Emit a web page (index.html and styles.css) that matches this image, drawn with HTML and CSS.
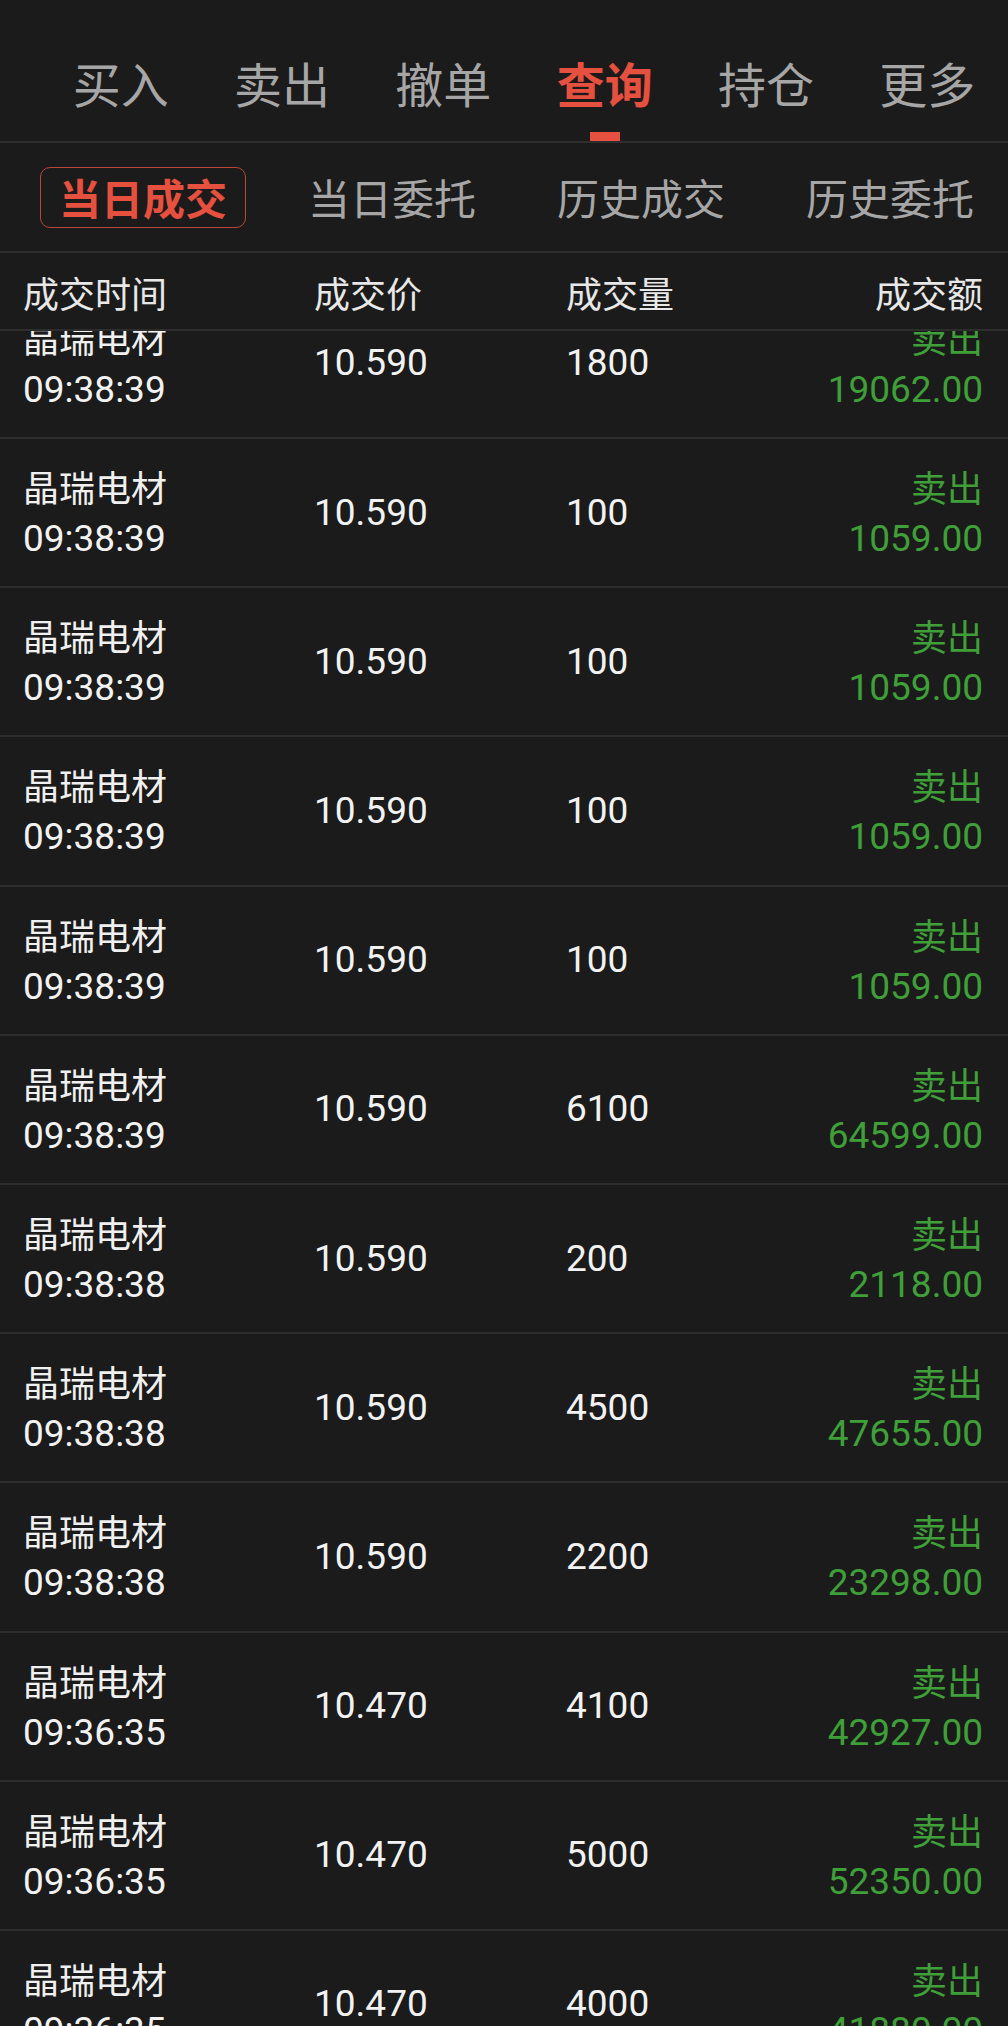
FILE: index.html
```html
<!DOCTYPE html>
<html lang="zh-CN">
<head>
<meta charset="utf-8">
<title>查询 - 当日成交</title>
<link rel="stylesheet" href="styles.css">
</head>
<body>
<div class="app">
  <nav class="topbar">
    <div class="tab"><span class="tab-label">买入</span><span class="tab-ind"></span></div>
    <div class="tab"><span class="tab-label">卖出</span><span class="tab-ind"></span></div>
    <div class="tab"><span class="tab-label">撤单</span><span class="tab-ind"></span></div>
    <div class="tab active"><span class="tab-label">查询</span><span class="tab-ind"></span></div>
    <div class="tab"><span class="tab-label">持仓</span><span class="tab-ind"></span></div>
    <div class="tab"><span class="tab-label">更多</span><span class="tab-ind"></span></div>
  </nav>
  <div class="subtabs">
    <div class="subtab active">当日成交</div>
    <div class="subtab">当日委托</div>
    <div class="subtab">历史成交</div>
    <div class="subtab">历史委托</div>
  </div>
  <div class="thead">
    <div class="th">成交时间</div>
    <div class="th">成交价</div>
    <div class="th">成交量</div>
    <div class="th th-right">成交额</div>
  </div>
  <div class="list">
    <div class="row"><div class="c1"><span class="name">晶瑞电材</span><span class="num">09:38:39</span></div><div class="num mid">10.590</div><div class="num mid">1800</div><div class="c4"><span class="side">卖出</span><span class="num green">19062.00</span></div></div>
    <div class="row"><div class="c1"><span class="name">晶瑞电材</span><span class="num">09:38:39</span></div><div class="num mid">10.590</div><div class="num mid">100</div><div class="c4"><span class="side">卖出</span><span class="num green">1059.00</span></div></div>
    <div class="row"><div class="c1"><span class="name">晶瑞电材</span><span class="num">09:38:39</span></div><div class="num mid">10.590</div><div class="num mid">100</div><div class="c4"><span class="side">卖出</span><span class="num green">1059.00</span></div></div>
    <div class="row"><div class="c1"><span class="name">晶瑞电材</span><span class="num">09:38:39</span></div><div class="num mid">10.590</div><div class="num mid">100</div><div class="c4"><span class="side">卖出</span><span class="num green">1059.00</span></div></div>
    <div class="row"><div class="c1"><span class="name">晶瑞电材</span><span class="num">09:38:39</span></div><div class="num mid">10.590</div><div class="num mid">100</div><div class="c4"><span class="side">卖出</span><span class="num green">1059.00</span></div></div>
    <div class="row"><div class="c1"><span class="name">晶瑞电材</span><span class="num">09:38:39</span></div><div class="num mid">10.590</div><div class="num mid">6100</div><div class="c4"><span class="side">卖出</span><span class="num green">64599.00</span></div></div>
    <div class="row"><div class="c1"><span class="name">晶瑞电材</span><span class="num">09:38:38</span></div><div class="num mid">10.590</div><div class="num mid">200</div><div class="c4"><span class="side">卖出</span><span class="num green">2118.00</span></div></div>
    <div class="row"><div class="c1"><span class="name">晶瑞电材</span><span class="num">09:38:38</span></div><div class="num mid">10.590</div><div class="num mid">4500</div><div class="c4"><span class="side">卖出</span><span class="num green">47655.00</span></div></div>
    <div class="row"><div class="c1"><span class="name">晶瑞电材</span><span class="num">09:38:38</span></div><div class="num mid">10.590</div><div class="num mid">2200</div><div class="c4"><span class="side">卖出</span><span class="num green">23298.00</span></div></div>
    <div class="row"><div class="c1"><span class="name">晶瑞电材</span><span class="num">09:36:35</span></div><div class="num mid">10.470</div><div class="num mid">4100</div><div class="c4"><span class="side">卖出</span><span class="num green">42927.00</span></div></div>
    <div class="row"><div class="c1"><span class="name">晶瑞电材</span><span class="num">09:36:35</span></div><div class="num mid">10.470</div><div class="num mid">5000</div><div class="c4"><span class="side">卖出</span><span class="num green">52350.00</span></div></div>
    <div class="row"><div class="c1"><span class="name">晶瑞电材</span><span class="num">09:36:35</span></div><div class="num mid">10.470</div><div class="num mid">4000</div><div class="c4"><span class="side">卖出</span><span class="num green">41880.00</span></div></div>
  </div>
</div>
</body>
</html>
```

FILE: styles.css
```css
html, body {
  margin: 0;
  padding: 0;
  background: #1b1b1b;
  height: 2026px;
  overflow: hidden;
}
body {
  font-family: "Noto Sans CJK SC", "Noto Sans", sans-serif;
  color: #eeeeee;
}
.app {
  width: 1008px;
  height: 2026px;
  display: flex;
  flex-direction: column;
  overflow: hidden;
}

/* top tabs */
.topbar {
  display: grid;
  grid-template-columns: repeat(6, 1fr);
  padding: 58px 0 0 40px;
  border-bottom: 2px solid #2d2d2d;
  flex: none;
}
.tab {
  display: flex;
  flex-direction: column;
  align-items: center;
}
.tab-label {
  font-size: 48px;
  line-height: 48px;
  color: #a6a6a6;
}
.tab-ind {
  width: 30px;
  height: 9px;
  margin-top: 26px;
  background: #e5503f;
  visibility: hidden;
}
.tab.active .tab-label {
  color: #e5503f;
  font-weight: 700;
}
.tab.active .tab-ind {
  visibility: visible;
}

/* sub tabs */
.subtabs {
  height: 108px;
  display: flex;
  align-items: center;
  gap: 43px;
  padding-left: 40px;
  border-bottom: 2px solid #2d2d2d;
  flex: none;
}
.subtab {
  box-sizing: border-box;
  height: 61px;
  padding: 0 18px;
  border: 1.5px solid transparent;
  border-radius: 10px;
  font-size: 42px;
  line-height: 58px;
  color: #a6a6a6;
  white-space: nowrap;
}
.subtab.active {
  border-color: #b9463b;
  color: #e5503f;
  font-weight: 700;
}

/* table head */
.thead {
  height: 76px;
  display: grid;
  grid-template-columns: 291px 252px 1fr auto;
  align-items: center;
  padding: 0 25px 0 23px;
  border-bottom: 2px solid #2d2d2d;
  flex: none;
  position: relative;
  z-index: 1;
  background: #1b1b1b;
}
.th {
  font-size: 36px;
  line-height: 40px;
  color: #e8e8e8;
  padding-top: 2px;
}
.th-right {
  text-align: right;
}

/* list */
.list {
  flex: 1;
  overflow: hidden;
}
.row {
  height: 147.2px;
  display: grid;
  grid-template-columns: 291px 252px 1fr auto;
  padding: 0 25px 0 23px;
  border-bottom: 2px solid #2d2d2d;
}
.row:first-child {
  margin-top: -41.2px;
}
.c1, .c4 {
  display: flex;
  flex-direction: column;
}
.c4 {
  align-items: flex-end;
}
.name, .side {
  margin-top: 27px;
  font-size: 36px;
  line-height: 40px;
  color: #f0f0f0;
}
.side {
  color: #3f9f38;
}
.num {
  font-family: Roboto, "Noto Sans", sans-serif;
  font-size: 37px;
  line-height: 40px;
  color: #f2f2f2;
}
.c1 .num, .c4 .num {
  margin-top: 13px;
}
.mid {
  align-self: center;
}
.green {
  color: #3f9f38;
}
```
